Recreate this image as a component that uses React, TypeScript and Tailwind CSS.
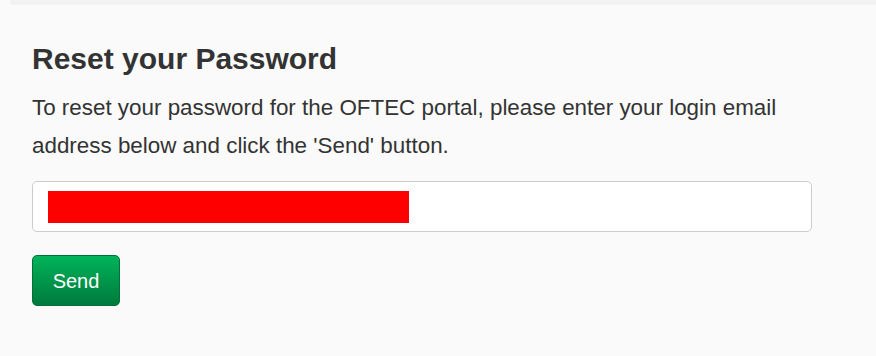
import React from "react";

function App() {
  return (
    <div className="min-h-screen bg-[#fafafa] font-['Liberation_Sans',Arial,sans-serif] text-[#333333]">
      <div className="flex">
        <div className="w-[10px]" />
        <div className="h-[5px] flex-1 rounded-bl-[4px] bg-[#f2f2f2]" />
      </div>
      <div className="w-[812px] pl-[32px] pt-[37px]">
        <h3 className="text-[30px] leading-[33px] font-bold">Reset your Password</h3>
        <p className="mt-[14px] text-[22.4px] leading-[38px]">
          To reset your password for the OFTEC portal, please enter your login email address below and click the 'Send' button.
        </p>
        <form className="mt-[16px]" onSubmit={(e) => e.preventDefault()}>
          <div className="flex h-[51px] items-start rounded-[5px] border border-[#cccccc] bg-white pt-[9px] pl-[15px]">
            <div className="h-[32px] w-[361px] bg-[#ff0000]" />
          </div>
          <button
            type="submit"
            className="mt-[23px] h-[51px] w-[88px] rounded-[5px] border border-[#00703a] bg-gradient-to-b from-[#00b45a] to-[#007a3c] text-[20px] text-white"
          >
            Send
          </button>
        </form>
      </div>
    </div>
  );
}

export default App;
